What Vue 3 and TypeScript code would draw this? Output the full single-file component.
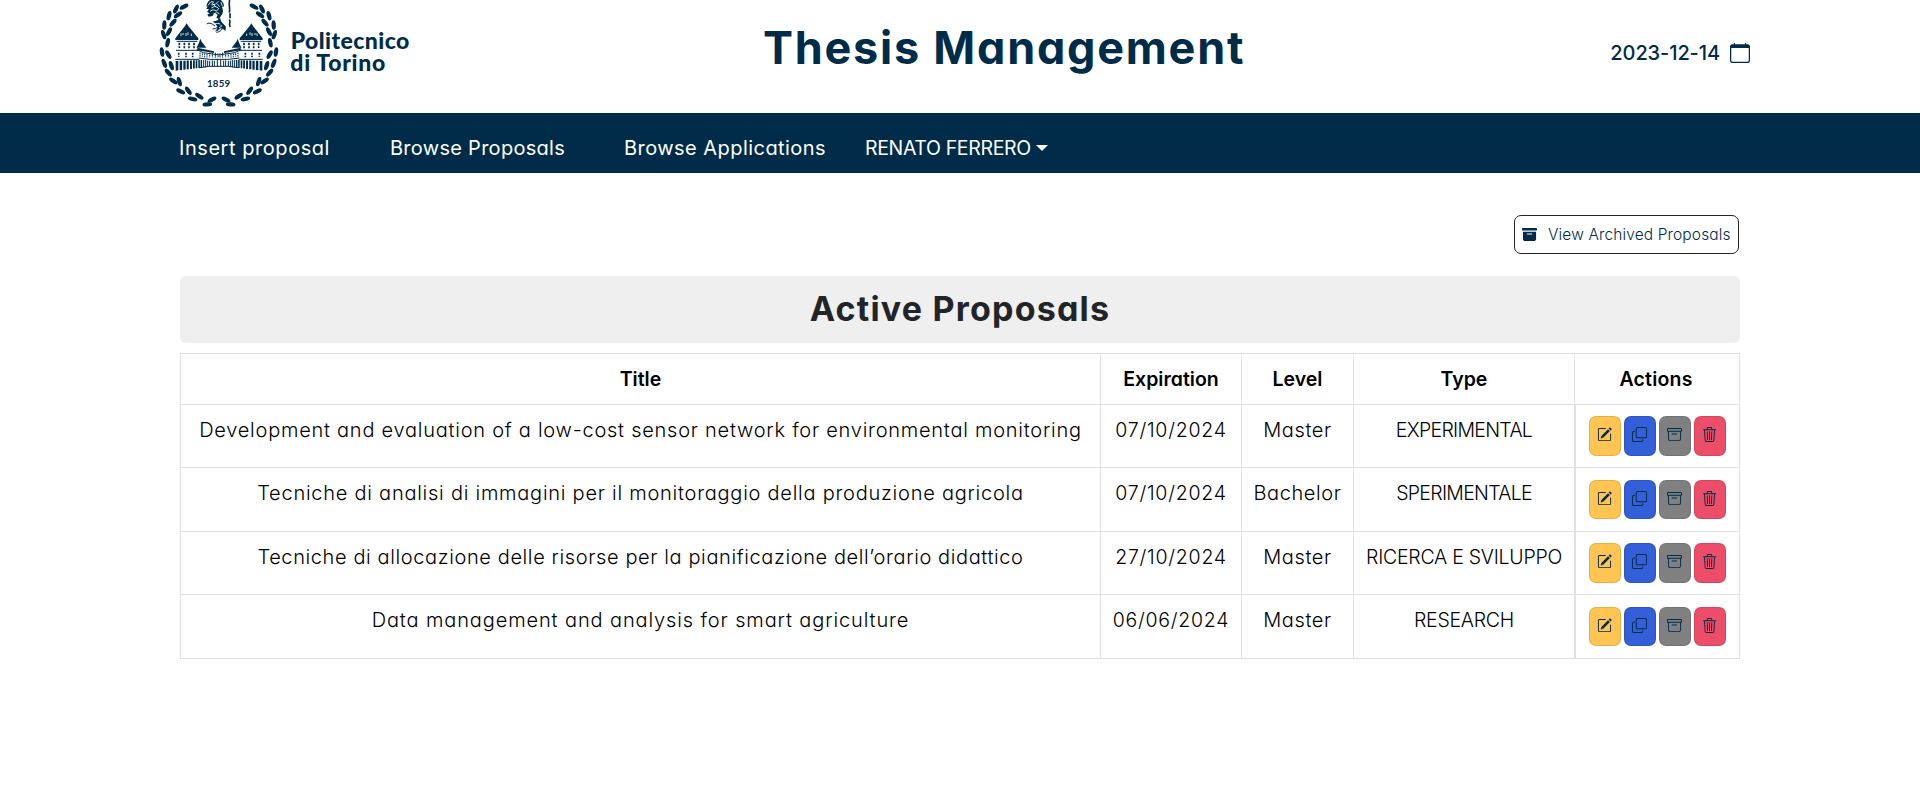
<script setup lang="ts">
interface Proposal {
  title: string
  tracking: number
  expiration: string
  level: string
  type: string
  typeTracking: number
}

const navItems = [
  { label: 'Insert proposal', cls: 'insert' },
  { label: 'Browse Proposals', cls: 'proposals' },
  { label: 'Browse Applications', cls: 'applications' },
]

const proposals: Proposal[] = [
  { title: 'Development and evaluation of a low-cost sensor network for environmental monitoring', tracking: 0.75, expiration: '07/10/2024', level: 'Master', type: 'EXPERIMENTAL', typeTracking: -0.7 },
  { title: 'Tecniche di analisi di immagini per il monitoraggio della produzione agricola', tracking: 0.75, expiration: '07/10/2024', level: 'Bachelor', type: 'SPERIMENTALE', typeTracking: -0.7 },
  { title: 'Tecniche di allocazione delle risorse per la pianificazione dell’orario didattico', tracking: 0.61, expiration: '27/10/2024', level: 'Master', type: 'RICERCA E SVILUPPO', typeTracking: -0.25 },
  { title: 'Data management and analysis for smart agriculture', tracking: 0.88, expiration: '06/06/2024', level: 'Master', type: 'RESEARCH', typeTracking: -0.25 },
]

const columns = [
  { label: 'Title', cls: 'c-title' },
  { label: 'Expiration', cls: 'c-exp' },
  { label: 'Level', cls: 'c-level' },
  { label: 'Type', cls: 'c-type' },
  { label: 'Actions', cls: 'c-actions' },
]

const actions = [
  {
    name: 'edit',
    d: 'M15.502 1.94a.5.5 0 0 1 0 .706L14.459 3.69l-2-2L13.502.646a.5.5 0 0 1 .707 0l1.293 1.293zm-1.75 2.456-2-2L4.939 9.21a.5.5 0 0 0-.121.196l-.805 2.414a.25.25 0 0 0 .316.316l2.414-.805a.5.5 0 0 0 .196-.12l6.813-6.814zM1 13.5A1.5 1.5 0 0 0 2.5 15h11a1.5 1.5 0 0 0 1.5-1.5v-6a.5.5 0 0 0-1 0v6a.5.5 0 0 1-.5.5h-11a.5.5 0 0 1-.5-.5v-11a.5.5 0 0 1 .5-.5H9a.5.5 0 0 0 0-1H2.5A1.5 1.5 0 0 0 1 2.5v11z',
  },
  {
    name: 'copy',
    d: 'M4 2a2 2 0 0 1 2-2h8a2 2 0 0 1 2 2v8a2 2 0 0 1-2 2H6a2 2 0 0 1-2-2V2Zm2-1a1 1 0 0 0-1 1v8a1 1 0 0 0 1 1h8a1 1 0 0 0 1-1V2a1 1 0 0 0-1-1H6ZM2 5a1 1 0 0 0-1 1v8a1 1 0 0 0 1 1h8a1 1 0 0 0 1-1v-1h1v1a2 2 0 0 1-2 2H2a2 2 0 0 1-2-2V6a2 2 0 0 1 2-2h1v1H2Z',
  },
  {
    name: 'archive',
    d: 'M0 2a1 1 0 0 1 1-1h14a1 1 0 0 1 1 1v2a1 1 0 0 1-1 1v7.5a2.5 2.5 0 0 1-2.5 2.5h-9A2.5 2.5 0 0 1 1 12.5V5a1 1 0 0 1-1-1V2zm2 3v7.5A1.5 1.5 0 0 0 3.5 14h9a1.5 1.5 0 0 0 1.5-1.5V5H2zm13-3H1v2h14V2zM5 7.5a.5.5 0 0 1 .5-.5h5a.5.5 0 0 1 0 1h-5a.5.5 0 0 1-.5-.5z',
  },
  {
    name: 'delete',
    d: 'M6.5 1h3a.5.5 0 0 1 .5.5v1H6v-1a.5.5 0 0 1 .5-.5ZM11 2.5v-1A1.5 1.5 0 0 0 9.5 0h-3A1.5 1.5 0 0 0 5 1.5v1H2.506a.58.58 0 0 0-.01 0H1.5a.5.5 0 0 0 0 1h.538l.853 10.66A2 2 0 0 0 4.885 16h6.23a2 2 0 0 0 1.994-1.84l.853-10.66h.538a.5.5 0 0 0 0-1h-.995a.59.59 0 0 0-.01 0H11Zm1.958 1-.846 10.58a1 1 0 0 1-.997.92h-6.23a1 1 0 0 1-.997-.92L3.042 3.5h9.916Zm-7.487 1a.5.5 0 0 1 .528.47l.5 8.5a.5.5 0 0 1-.998.06L5 5.03a.5.5 0 0 1 .47-.53Zm5.058 0a.5.5 0 0 1 .47.53l-.5 8.5a.5.5 0 1 1-.998-.06l.5-8.5a.5.5 0 0 1 .528-.47ZM8 4.5a.5.5 0 0 1 .5.5v8.5a.5.5 0 0 1-1 0V5a.5.5 0 0 1 .5-.5Z',
  },
]

// Laurel leaves of one half of the wreath: x, y, rotation
const leaves: [number, number, number][] = [
  [102, 20, -28], [78, 27, -65], [84, 44, -35], [57, 47, -75], [69, 68, -50],
  [43, 75, -88], [57, 95, -62], [41, 104, 70], [53, 128, -78], [36, 156, 82],
  [55, 164, 60], [43, 190, 68], [64, 197, 72], [55, 218, 50], [70, 243, 34],
  [88, 245, 72], [92, 274, 26], [115, 272, 55], [128, 297, 12], [148, 289, 35],
  [172, 313, -4], [186, 299, -28],
]

const arches = [0, 12, 23, 33, 43, 52, 60, 68, 75]
</script>

<template>
  <div class="page">
    <header class="header">
      <svg class="logo" viewBox="0 0 840 339">
        <g class="ink">
          <g v-for="side in [0, 1]" :key="side" :transform="side ? 'matrix(-1 0 0 1 414 0)' : undefined">
            <ellipse
              v-for="(l, i) in leaves"
              :key="i"
              :cx="l[0]"
              :cy="l[1]"
              rx="14.5"
              ry="6.5"
              :transform="`rotate(${l[2]} ${l[0]} ${l[1]})`"
            />
            <!-- corner tower -->
            <path d="M110 70l5 8 30 37v5H76v-5l29-37z" />
            <path class="cutline" d="M93 108v-8M99 105v-6M108 108v-9M114 105v-8M124 108v-7" />
            <path class="line" d="M80 124h62M78 151h68M76 178h72" />
            <path class="line bold" d="M88 128v16M103 128v17M117 128v17M132 128v17" stroke-dasharray="8 3" />
            <path class="line bold" d="M86 158v12M108 158v14M128 158v14" stroke-dasharray="6 3" />
            <!-- inner turret and wing -->
            <path d="M151 116l4 9 14 18h-29l8-18zM142 143l50 11v5l-50-8z" />
            <path class="line" d="M140 149l20 9 47 7M146 174l32 4h29M148 203l30-4h29" />
            <path class="line" d="M150 158v12M157 160v10M164 161v11M171 162v11M179 158v15M187 158v15M196 158v16M204 160v14" stroke-dasharray="5 2" />
            <!-- ground-floor arcade -->
            <path
              v-for="(a, i) in arches"
              :key="'a' + i"
              :d="`M${77 + a} ${212 - a * 0.12}v${-29 + a * 0.08}h${8 - a * 0.05}v${28 - a * 0.06}z`"
            />
            <path class="line" d="M161 180v22M167 180v22M173 182v18M179 182v17M187 181v17M193 182v17M202 178v22" />
          </g>
          <!-- helmeted bust and spear -->
          <path d="M169 17c3-8 6-15 13-18h29c8 5 11 13 11 20l-6 2c3 7 4 14 1 20-3 7-8 10-9 16l-9-3 4-10-8-4-8 8-11 2-4-6 7-4-8-4 6-8-9-2 5-5z" />
          <path class="cutline" d="M174 16l9-11 8 1-6 9 11-2 9-9M184 24l10-5 10 4M180 34l9-5 11 4 7-9M189 43l11-6 8 4M213 6l4 12M201 11l8 9M190 13l8 8" />
          <path d="M188 64c12 1 17-6 22-11l4 12 14 15-2 14c-5-6-9-9-16-8-4 5-10 8-16 8 7-5 9-9 8-14-3-6-8-11-14-16z" />
          <path class="cutline" d="M195 71l13-1 6 9M207 84l9-7" />
          <path class="line" d="M170 72c9-6 18 0 25 6M188 87c10 0 21-7 27-16M199 97c9-1 14-5 17-10" />
          <path class="line bold" d="M239 0c-4 12 2 24-1 38M240 40v15M237 59c8 5-3 13 4 22" />
        </g>
        <text x="171" y="261" class="year">1859</text>
        <text x="422" y="146" class="name">Politecnico</text>
        <text x="421" y="212" class="name second">di Torino</text>
      </svg>
      <h1>Thesis Management</h1>
      <div class="date">
        <span>2023-12-14</span>
        <svg viewBox="0 0 16 16"><path d="M3.5 0a.5.5 0 0 1 .5.5V1h8V.5a.5.5 0 0 1 1 0V1h1a2 2 0 0 1 2 2v11a2 2 0 0 1-2 2H2a2 2 0 0 1-2-2V3a2 2 0 0 1 2-2h1V.5a.5.5 0 0 1 .5-.5zM1 4v10a1 1 0 0 0 1 1h12a1 1 0 0 0 1-1V4H1z" /></svg>
      </div>
    </header>

    <nav class="nav">
      <a v-for="n in navItems" :key="n.label" :class="n.cls">{{ n.label }}</a>
      <a class="user">RENATO FERRERO<i class="caret"></i></a>
    </nav>

    <main class="main">
      <div class="toolbar">
        <button class="archived" type="button">
          <svg viewBox="0 0 16 16"><path d="M12.643 15C13.979 15 15 13.845 15 12.5V5H1v7.5C1 13.845 2.021 15 3.357 15h9.286zM5.5 7h5a.5.5 0 0 1 0 1h-5a.5.5 0 0 1 0-1zM.8 1a.8.8 0 0 0-.8.8V3a.8.8 0 0 0 .8.8h14.4A.8.8 0 0 0 16 3V1.8a.8.8 0 0 0-.8-.8H.8z" /></svg>
          <span>View Archived Proposals</span>
        </button>
      </div>
      <h2>Active Proposals</h2>
      <table>
        <colgroup>
          <col v-for="c in columns" :key="c.label" :class="c.cls" />
        </colgroup>
        <thead>
          <tr>
            <th v-for="c in columns" :key="c.label">{{ c.label }}</th>
          </tr>
        </thead>
        <tbody>
          <tr v-for="p in proposals" :key="p.title">
            <td class="title" :style="{ letterSpacing: p.tracking + 'px' }">{{ p.title }}</td>
            <td class="expiration">{{ p.expiration }}</td>
            <td class="level">{{ p.level }}</td>
            <td :style="{ letterSpacing: p.typeTracking + 'px' }">{{ p.type }}</td>
            <td class="actions">
              <div class="buttons">
                <button v-for="a in actions" :key="a.name" type="button" :class="a.name" :aria-label="a.name">
                  <svg viewBox="0 0 16 16"><path :d="a.d" fill-rule="evenodd" /></svg>
                </button>
              </div>
            </td>
          </tr>
        </tbody>
      </table>
    </main>
  </div>
</template>

<style>
body {
  background: #fff;
}
</style>

<style scoped>
.page {
  font-family: Inter, 'Open Sans', sans-serif;
  font-feature-settings: 'cv11';
  color: #000;
}
h1,
h2 {
  margin: 0;
}
button {
  box-sizing: border-box;
  padding: 0;
  font: inherit;
  font-feature-settings: inherit;
}
.header {
  display: flex;
  height: 113px;
  padding: 0 170px 0 150px;
  color: #002b49;
}
.logo {
  width: 280px;
  height: 113px;
}
.ink {
  fill: #002b49;
}
.cutline {
  fill: none;
  stroke: #fff;
  stroke-width: 2.5;
}
.line {
  fill: none;
  stroke: #002b49;
  stroke-width: 3;
}
.bold {
  stroke-width: 5;
}
.year {
  font: 700 29px Lato, sans-serif;
  letter-spacing: 0.8px;
  fill: #002b49;
}
.name {
  font: 900 69px Lato, sans-serif;
  letter-spacing: 1.3px;
  fill: #002b49;
}
.second {
  letter-spacing: 2.1px;
}
h1 {
  margin-left: 333px;
  font-size: 45px;
  font-weight: 700;
  line-height: 95px;
  letter-spacing: 1.75px;
  white-space: nowrap;
}
.date {
  display: flex;
  gap: 10px;
  align-items: center;
  height: 105px;
  margin-left: auto;
  font-size: 20px;
  font-weight: 500;
  letter-spacing: -0.1px;
}
.date svg {
  width: 20px;
  height: 20px;
  fill: currentColor;
}
.nav {
  display: flex;
  align-items: flex-start;
  box-sizing: border-box;
  height: 60px;
  padding: 20px 0 0 179px;
  background: #002b49;
  color: #fff;
  font-size: 20px;
  line-height: 30px;
  white-space: nowrap;
}
.insert {
  width: 211px;
  letter-spacing: 0.55px;
}
.proposals {
  width: 234px;
  letter-spacing: 0.28px;
}
.applications {
  width: 241px;
  letter-spacing: 0.45px;
}
.user {
  display: flex;
  align-items: center;
  font-size: 19.5px;
  letter-spacing: -0.35px;
}
.caret {
  margin-left: 5px;
  border: 6px solid transparent;
  border-top-color: #fff;
  border-bottom: 0;
}
.main {
  padding: 42px 180px 0;
}
.toolbar {
  display: flex;
  justify-content: flex-end;
  height: 61px;
}
.archived {
  display: flex;
  align-items: center;
  gap: 11px;
  width: 225px;
  height: 39px;
  margin-right: 1px;
  padding-left: 7px;
  border: 1px solid #212529;
  border-radius: 7px;
  background: #fff;
  color: #002b49;
  font-size: 15.5px;
  font-weight: 300;
  letter-spacing: 0.13px;
  white-space: nowrap;
}
.archived span {
  margin-top: -1px;
}
.archived svg {
  width: 15px;
  height: 15px;
  fill: currentColor;
}
h2 {
  height: 67px;
  border-radius: 6px;
  background: #efefef;
  color: #212529;
  font-size: 34px;
  font-weight: 700;
  line-height: 66px;
  letter-spacing: 1.2px;
  text-align: center;
}
table {
  width: 1560px;
  margin-top: 10px;
  border-collapse: collapse;
  table-layout: fixed;
  font-size: 19.5px;
  line-height: 30px;
  text-align: center;
  white-space: nowrap;
}
.c-title {
  width: 920px;
}
.c-exp {
  width: 141px;
}
.c-level {
  width: 112px;
}
.c-type {
  width: 221px;
}
.c-actions {
  width: 165px;
}
th,
td {
  padding: 10px 0;
  border: 1px solid #dee2e6;
}
th {
  font-weight: 600;
}
th:last-child {
  padding-right: 2px;
  letter-spacing: 0.2px;
}
td {
  height: 43px;
  padding-bottom: 0;
  font-weight: 300;
  vertical-align: top;
}
tr {
  height: 51px;
}
tbody tr:nth-child(odd) {
  height: 63px;
}
tbody tr:nth-child(even) {
  height: 64px;
}
.title {
  font-size: 20px;
}
.expiration {
  letter-spacing: 0.75px;
}
.level {
  font-size: 20px;
  letter-spacing: 0.6px;
}
.actions {
  padding: 11px 0 0 14px;
  box-shadow: inset 1px 0 0 #dee2e6;
}
tr:nth-child(even) .actions {
  padding-top: 12px;
}
.buttons {
  display: flex;
  gap: 3px;
}
.buttons button {
  display: flex;
  width: 32px;
  height: 40px;
  padding: 10px 0 0 7px;
  border: 1px solid rgba(0, 0, 0, 0.1);
  border-radius: 7px;
}
tr:nth-child(even) .buttons button {
  height: 39px;
}
.buttons svg {
  width: 15px;
  height: 15px;
  fill: #002b49;
}
.edit {
  background: #ffc451;
}
.copy {
  background: #335fd8;
}
.archive {
  background: #808080;
}
.delete {
  background: #ec4d69;
}
</style>
